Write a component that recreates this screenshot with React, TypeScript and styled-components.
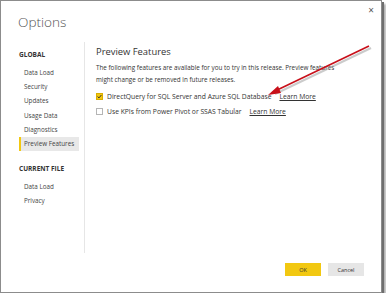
import React from 'react';
import styled, { createGlobalStyle } from 'styled-components';

const Global = createGlobalStyle`
  html, body { margin: 0; padding: 0; background: #fff; }
  body { font-family: "Open Sans", "Noto Sans", sans-serif; color: #333; }
`;

const Dialog = styled.div`
  position: relative;
  box-sizing: border-box;
  width: 382px;
  height: 293px;
  border: 1px solid #8c8c8c;
  box-shadow: 2px 2px 0 #6e6e6e, 4px 4px 2px #b0b0b0;
  background: #fff;
  display: flex;
  flex-direction: column;
`;

const Close = styled.div`
  position: absolute;
  top: 3px;
  right: 7px;
  font-size: 10px;
  color: #555;
  line-height: 12px;
`;

const Title = styled.h1`
  margin: 0;
  padding: 11px 0 0 17px;
  height: 41px;
  box-sizing: border-box;
  font-size: 13.6px;
  font-weight: 300;
  line-height: 20px;
  color: #555;
`;

const Body = styled.div`
  display: flex;
  height: 211px;
`;

const Sidebar = styled.nav`
  width: 84px;
  flex-shrink: 0;
  box-sizing: border-box;
  padding: 7px 0 0 18px;
  border-right: 1px solid #e6e6e6;
`;

const Group = styled.div<{ $gap: number }>`
  font-size: 6.5px;
  font-weight: 700;
  color: #333;
  line-height: 12px;
  margin-top: ${p => p.$gap}px;
  margin-bottom: 5px;
`;

const Item = styled.div<{ $active?: boolean }>`
  height: 14.2px;
  line-height: 14px;
  font-size: 6.3px;
  color: #444;
  padding-left: 3px;
  width: 60px;
  box-sizing: border-box;
  background: ${p => (p.$active ? '#e8e8e8' : 'transparent')};
  border-left: 2px solid ${p => (p.$active ? '#f2c811' : 'transparent')};
`;

const Main = styled.section`
  flex: 1;
  padding: 3px 0 0 11px;
`;

const Heading = styled.h2`
  margin: 0;
  font-size: 9.4px;
  font-weight: 400;
  line-height: 14px;
  color: #333;
`;

const Text = styled.p`
  margin: 3px 0 3px;
  font-size: 6.3px;
  line-height: 12px;
  color: #333;
`;

const Row = styled.label`
  display: flex;
  align-items: center;
  height: 15px;
  font-size: 6.75px;
  color: #333;
`;

const Box = styled.span<{ $checked?: boolean }>`
  width: 7px;
  height: 7px;
  box-sizing: border-box;
  margin-right: 4px;
  border: 1px solid ${p => (p.$checked ? '#d9ad00' : '#b5b5b5')};
  background: ${p => (p.$checked ? '#f2c811' : '#fff')};
  display: flex;
  align-items: center;
  justify-content: center;
`;

const Link = styled.span`
  margin-left: 8px;
  text-decoration: underline;
  color: #333;
`;

const Footer = styled.div`
  flex: 1;
  display: flex;
  justify-content: flex-end;
  align-items: flex-start;
  gap: 7px;
  padding: 10px 17px 0 0;
`;

const Button = styled.button<{ $primary?: boolean }>`
  width: 36px;
  height: 13px;
  padding: 0;
  border: none;
  font-family: inherit;
  font-size: 5.5px;
  color: #333;
  background: ${p => (p.$primary ? '#f2c811' : '#e6e6e6')};
`;

const Arrow = styled.svg`
  position: absolute;
  left: 262px;
  top: 40px;
  overflow: visible;
`;

const Check = () => (
  <svg width="5" height="5" viewBox="0 0 5 5">
    <path d="M0.6 2.6 L2 3.9 L4.4 1" stroke="#333" strokeWidth="1" fill="none" />
  </svg>
);

export default function App() {
  return (
    <>
      <Global />
      <Dialog>
        <Close>×</Close>
        <Title>Options</Title>
        <Body>
          <Sidebar>
            <Group $gap={0}>GLOBAL</Group>
            <Item>Data Load</Item>
            <Item>Security</Item>
            <Item>Updates</Item>
            <Item>Usage Data</Item>
            <Item>Diagnostics</Item>
            <Item $active>Preview Features</Item>
            <Group $gap={12}>CURRENT FILE</Group>
            <Item>Data Load</Item>
            <Item>Privacy</Item>
          </Sidebar>
          <Main>
            <Heading>Preview Features</Heading>
            <Text>
              The following features are available for you to try in this release. Preview features
              <br />
              might change or be removed in future releases.
            </Text>
            <Row>
              <Box $checked>
                <Check />
              </Box>
              DirectQuery for SQL Server and Azure SQL Database
              <Link>Learn More</Link>
            </Row>
            <Row>
              <Box />
              Use KPIs from Power Pivot or SSAS Tabular
              <Link>Learn More</Link>
            </Row>
          </Main>
        </Body>
        <Footer>
          <Button $primary>OK</Button>
          <Button>Cancel</Button>
        </Footer>
        <Arrow width="110" height="60">
          <line x1="108" y1="7" x2="12" y2="53" stroke="#999" strokeWidth="2" opacity="0.5" />
          <line x1="106" y1="5" x2="10" y2="51" stroke="#c8101a" strokeWidth="1.6" />
          <polygon points="5,54 15,45 18,52" fill="#c8101a" />
        </Arrow>
      </Dialog>
    </>
  );
}
